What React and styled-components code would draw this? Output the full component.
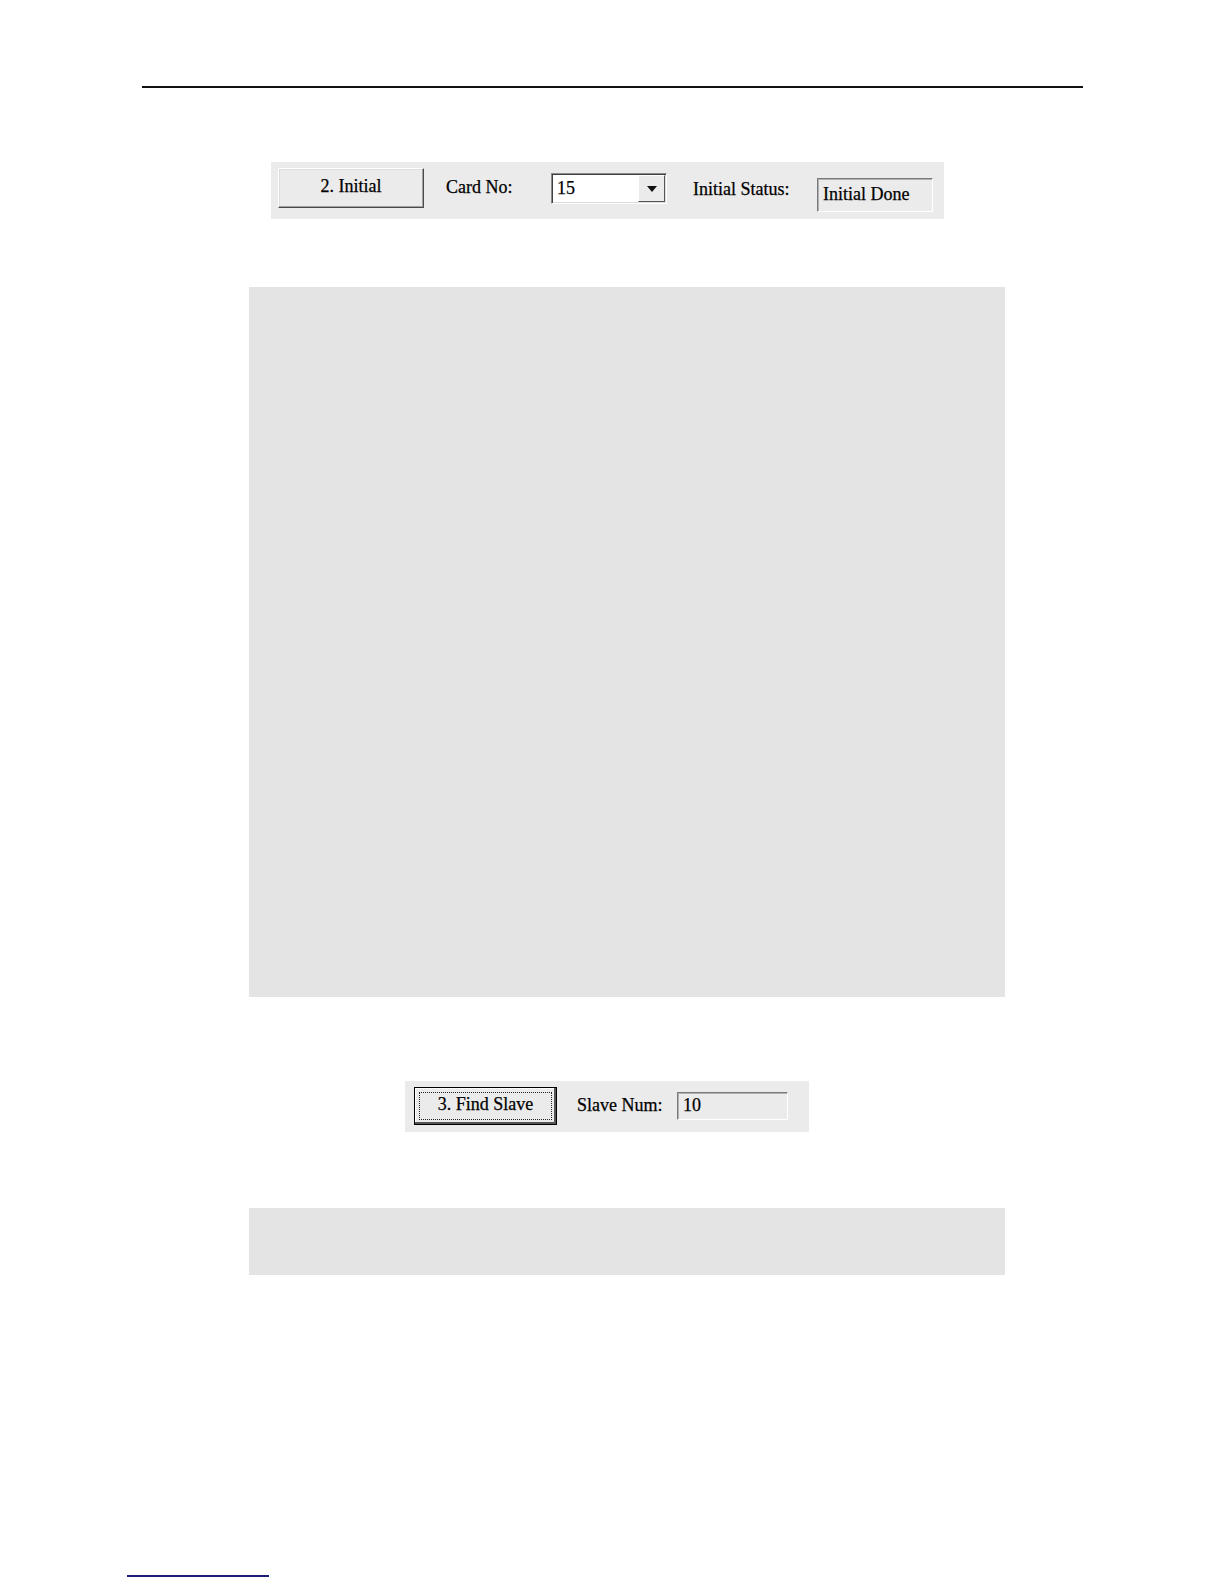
import React from 'react';
import styled, { createGlobalStyle } from 'styled-components';

const GlobalStyle = createGlobalStyle`
  html, body {
    margin: 0;
    padding: 0;
    background: #fff;
    overflow: hidden;
  }
  body {
    font-family: "Liberation Serif", "Times New Roman", serif;
    color: #000;
  }
`;

const Page = styled.div`
  width: 100%;
  height: 1584px;
  padding-top: 86px;
  box-sizing: border-box;
  display: flex;
  flex-direction: column;
`;

const HeaderRule = styled.div`
  margin-left: 142px;
  width: 941px;
  height: 2px;
  background: #111;
`;

// dialog strip the controls sit on
const Toolbar = styled.div`
  margin-left: ${(p) => p.left}px;
  margin-top: ${(p) => p.top}px;
  width: ${(p) => p.width}px;
  height: ${(p) => p.height}px;
  background: #ebebeb;
  display: flex;
  align-items: flex-start;
  box-sizing: border-box;
  padding-left: ${(p) => p.pad}px;
  flex-shrink: 0;
`;

const WinButton = styled.button`
  width: ${(p) => p.width}px;
  height: ${(p) => p.height}px;
  margin-top: ${(p) => p.top}px;
  box-sizing: border-box;
  background: #ebebeb;
  font-family: inherit;
  font-size: 18px;
  color: #000;
  -webkit-text-stroke: 0.25px #000;
  padding: 0 0 4px;
  border: 1px solid;
  border-color: #fff #4a4a4a #4a4a4a #fff;
  box-shadow: inset -1px -1px 0 #a0a0a0, inset 1px 1px 0 #dcdcdc;
  display: flex;
  align-items: center;
  justify-content: center;
  cursor: default;
  flex-shrink: 0;

  ${(p) =>
    p.focused &&
    `
    padding: 4px;
    border: 1px solid #000;
    box-shadow: inset -2px -2px 0 #555, inset 1px 1px 0 #fff;
  `}
`;

const FocusRing = styled.span`
  flex: 1;
  align-self: stretch;
  border: 1px dotted #222;
  display: flex;
  align-items: center;
  justify-content: center;
  padding-bottom: 3px;
`;

const Label = styled.span`
  font-size: 18px;
  -webkit-text-stroke: 0.25px #000;
  margin-left: ${(p) => p.gap}px;
  margin-top: ${(p) => p.top}px;
  width: ${(p) => p.width}px;
  white-space: nowrap;
  flex-shrink: 0;
`;

const Combo = styled.div`
  width: 116px;
  height: 31px;
  margin-top: 11px;
  box-sizing: border-box;
  display: flex;
  background: #fff;
  border: 1px solid;
  border-color: #8a8a8a #fff #fff #8a8a8a;
  box-shadow: inset 1px 1px 0 #404040, inset -1px -1px 0 #dcdcdc;
  flex-shrink: 0;
`;

const ComboText = styled.div`
  flex: 1;
  font-size: 18px;
  -webkit-text-stroke: 0.25px #000;
  padding-left: 5px;
  line-height: 28px;
`;

const ComboArrow = styled.div`
  width: 27px;
  margin: 1px 1px 1px 0;
  background: #ebebeb;
  border: 1px solid;
  border-color: #fff #555 #555 #fff;
  box-sizing: border-box;
  display: flex;
  align-items: center;
  justify-content: center;
`;

const ReadOnlyField = styled.div`
  width: ${(p) => p.width}px;
  height: ${(p) => p.height}px;
  margin-top: ${(p) => p.top}px;
  box-sizing: border-box;
  background: #ebebeb;
  border: 1px solid;
  border-color: #7a7a7a #fff #fff #7a7a7a;
  box-shadow: inset 1px 1px 0 #b0b0b0;
  font-size: 18px;
  -webkit-text-stroke: 0.25px #000;
  padding-left: 5px;
  line-height: ${(p) => p.height - 4}px;
  white-space: nowrap;
  flex-shrink: 0;
`;

const GreyPanel = styled.div`
  margin-left: 249px;
  margin-top: ${(p) => p.top}px;
  width: 756px;
  height: ${(p) => p.height}px;
  background: #e4e4e4;
  flex-shrink: 0;
`;

const FooterRule = styled.div`
  margin-left: 127px;
  margin-top: auto;
  margin-bottom: 7px;
  width: 142px;
  height: 2px;
  background: #1c1c7a;
`;

const DownArrow = () => (
  <svg width="12" height="8" viewBox="0 0 12 8">
    <polygon points="1,1 11,1 6,7" fill="#111" />
  </svg>
);

export default function App() {
  return (
    <>
      <GlobalStyle />
      <Page>
        <HeaderRule />

        <Toolbar left={271} top={74} width={673} height={57} pad={7}>
          <WinButton width={146} height={40} top={6}>
            2. Initial
          </WinButton>
          <Label gap={22} width={105} top={15}>Card No:</Label>
          <Combo>
            <ComboText>15</ComboText>
            <ComboArrow>
              <DownArrow />
            </ComboArrow>
          </Combo>
          <Label gap={26} width={124} top={17}>Initial Status:</Label>
          <ReadOnlyField width={116} height={34} top={16}>
            Initial Done
          </ReadOnlyField>
        </Toolbar>

        <GreyPanel top={68} height={710} />

        <Toolbar left={405} top={84} width={404} height={51} pad={9}>
          <WinButton width={143} height={38} top={6} focused>
            <FocusRing>3. Find Slave</FocusRing>
          </WinButton>
          <Label gap={20} width={100} top={14}>Slave Num:</Label>
          <ReadOnlyField width={111} height={28} top={11}>
            10
          </ReadOnlyField>
        </Toolbar>

        <GreyPanel top={76} height={67} />

        <FooterRule />
      </Page>
    </>
  );
}
